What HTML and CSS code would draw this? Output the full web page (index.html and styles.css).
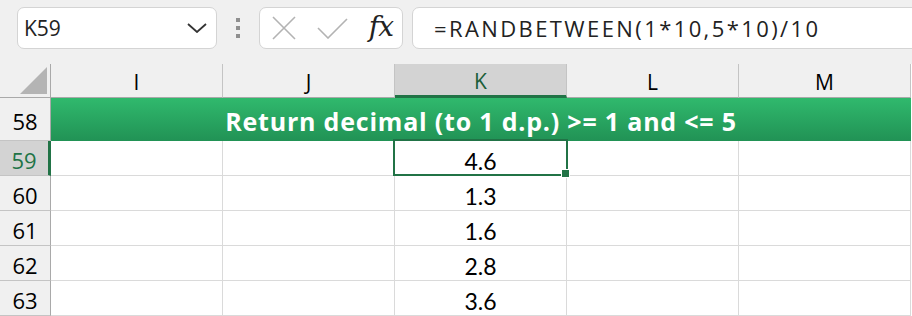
FILE: index.html
```html
<!DOCTYPE html>
<html lang="en">
<head>
  <meta charset="UTF-8" />
  <title>RANDBETWEEN decimal</title>
  <link rel="stylesheet" href="styles.css">
</head>
<body>

<div class="formula-bar">
  <div class="name-box">
    <span>K59</span>
    <svg class="chevron" width="20" height="10" viewBox="0 0 20 10">
      <polyline points="1,1 10,9 19,1" fill="none" stroke="#333" stroke-width="1.8"/>
    </svg>
  </div>
  <div class="grip"><i></i><i></i><i></i></div>
  <div class="fx-buttons">
    <svg width="24" height="24" viewBox="0 0 24 24">
      <path d="M1 1 L23 23 M23 1 L1 23" stroke="#b3b3b3" stroke-width="1.6" fill="none"/>
    </svg>
    <svg width="31" height="21" viewBox="0 0 31 21">
      <polyline points="1,10 11,20 30,1" stroke="#b3b3b3" stroke-width="1.6" fill="none"/>
    </svg>
    <span class="fx">fx</span>
  </div>
  <div class="formula-input">=RANDBETWEEN(1*10,5*10)/10</div>
</div>

<div class="sheet">
  <div class="corner"><span class="select-all"></span></div>
  <div class="col-head">I</div>
  <div class="col-head">J</div>
  <div class="col-head active">K</div>
  <div class="col-head">L</div>
  <div class="col-head">M</div>

  <div class="row-head">58</div>
  <div class="title">Return decimal (to 1 d.p.) &gt;= 1 and &lt;= 5</div>

  <div class="row-head active">59</div>
  <div class="cell"></div><div class="cell"></div>
  <div class="cell selected">4.6</div>
  <div class="cell"></div><div class="cell"></div>

  <div class="row-head">60</div>
  <div class="cell"></div><div class="cell"></div>
  <div class="cell">1.3</div>
  <div class="cell"></div><div class="cell"></div>

  <div class="row-head">61</div>
  <div class="cell"></div><div class="cell"></div>
  <div class="cell">1.6</div>
  <div class="cell"></div><div class="cell"></div>

  <div class="row-head">62</div>
  <div class="cell"></div><div class="cell"></div>
  <div class="cell">2.8</div>
  <div class="cell"></div><div class="cell"></div>

  <div class="row-head">63</div>
  <div class="cell"></div><div class="cell"></div>
  <div class="cell">3.6</div>
  <div class="cell"></div><div class="cell"></div>
</div>

</body>
</html>
```

FILE: styles.css
```css
body {
  margin: 0;
  background-color: #f0f0f0;
  font-family: 'Open Sans', 'Noto Sans', sans-serif;
  color: #000;
  overflow: hidden;
}
.formula-bar {
  height: 64px;
  box-sizing: border-box;
  padding: 7px 0 0 17px;
  display: flex;
  align-items: flex-start;
}
.name-box,
.fx-buttons,
.formula-input {
  height: 42px;
  box-sizing: border-box;
  background-color: #fff;
  border: 1px solid #d4d4d4;
  border-radius: 7px;
  display: flex;
  align-items: center;
}
.name-box {
  width: 200px;
  padding: 0 9px 0 6px;
  justify-content: space-between;
  font-size: 21px;
  color: #222;
}
.grip {
  width: 42px;
  height: 42px;
  display: flex;
  flex-direction: column;
  align-items: center;
  justify-content: center;
  gap: 4px;
}
.grip i {
  width: 4px;
  height: 4px;
  background-color: #8f8f8f;
}
.fx-buttons {
  width: 144px;
  padding: 0 9px 0 12px;
  justify-content: space-between;
}
.fx {
  font-family: 'DejaVu Serif', serif;
  font-style: italic;
  font-size: 28px;
  color: #222;
  margin-top: -3px;
  letter-spacing: -1px;
}
.formula-input {
  flex-grow: 1;
  margin-left: 9px;
  margin-right: -10px;
  padding-left: 21px;
  font-size: 22px;
  letter-spacing: 2.4px;
  color: #222;
}
.sheet {
  display: grid;
  grid-template-columns: 51px repeat(5, 172px);
  grid-template-rows: 34px 43px repeat(5, 35px);
  background-color: #fff;
}
.sheet > div {
  box-sizing: border-box;
  display: flex;
  align-items: center;
  justify-content: center;
}
.corner {
  background-color: #f0f0f0;
  border-right: 1px solid #a9a9a9;
  border-bottom: 1px solid #a9a9a9;
  align-items: flex-end !important;
  justify-content: flex-end !important;
  padding: 0 3px 3px 0;
}
.select-all {
  width: 0;
  height: 0;
  border-left: 27px solid transparent;
  border-bottom: 27px solid #b4b4b4;
}
.col-head {
  background-color: #f0f0f0;
  border-right: 1px solid #c4c4c4;
  border-bottom: 1px solid #a9a9a9;
  font-size: 21px;
  padding-top: 2px;
}
.col-head.active {
  background-color: #d3d3d3;
  color: #1b5e38;
  border-bottom: 3px solid #217346;
}
.row-head {
  background-color: #f0f0f0;
  border-right: 1px solid #a9a9a9;
  border-bottom: 1px solid #c4c4c4;
  font-size: 22px;
  padding-top: 4px;
}
.row-head.active {
  background-color: #d3d3d3;
  color: #217346;
  border-right: 3px solid #217346;
}
.title {
  grid-column: 2 / 7;
  background: linear-gradient(#30b96d, #219255);
  color: #fff;
  font-family: 'Open Sans', sans-serif;
  font-weight: bold;
  font-size: 25px;
  letter-spacing: 0.8px;
  padding-top: 3px;
}
.cell {
  border-right: 1px solid #dadada;
  border-bottom: 1px solid #dadada;
  font-family: 'Lato', sans-serif;
  font-size: 23px;
  padding-top: 6px;
}
.cell.selected {
  position: relative;
}
.cell.selected::before {
  content: "";
  position: absolute;
  left: -2px;
  top: -2px;
  right: -2px;
  bottom: -1px;
  border: 2px solid #217346;
}
.cell.selected::after {
  content: "";
  position: absolute;
  right: -4px;
  bottom: -3px;
  width: 7px;
  height: 7px;
  background-color: #217346;
  border: 1px solid #fff;
}
```
